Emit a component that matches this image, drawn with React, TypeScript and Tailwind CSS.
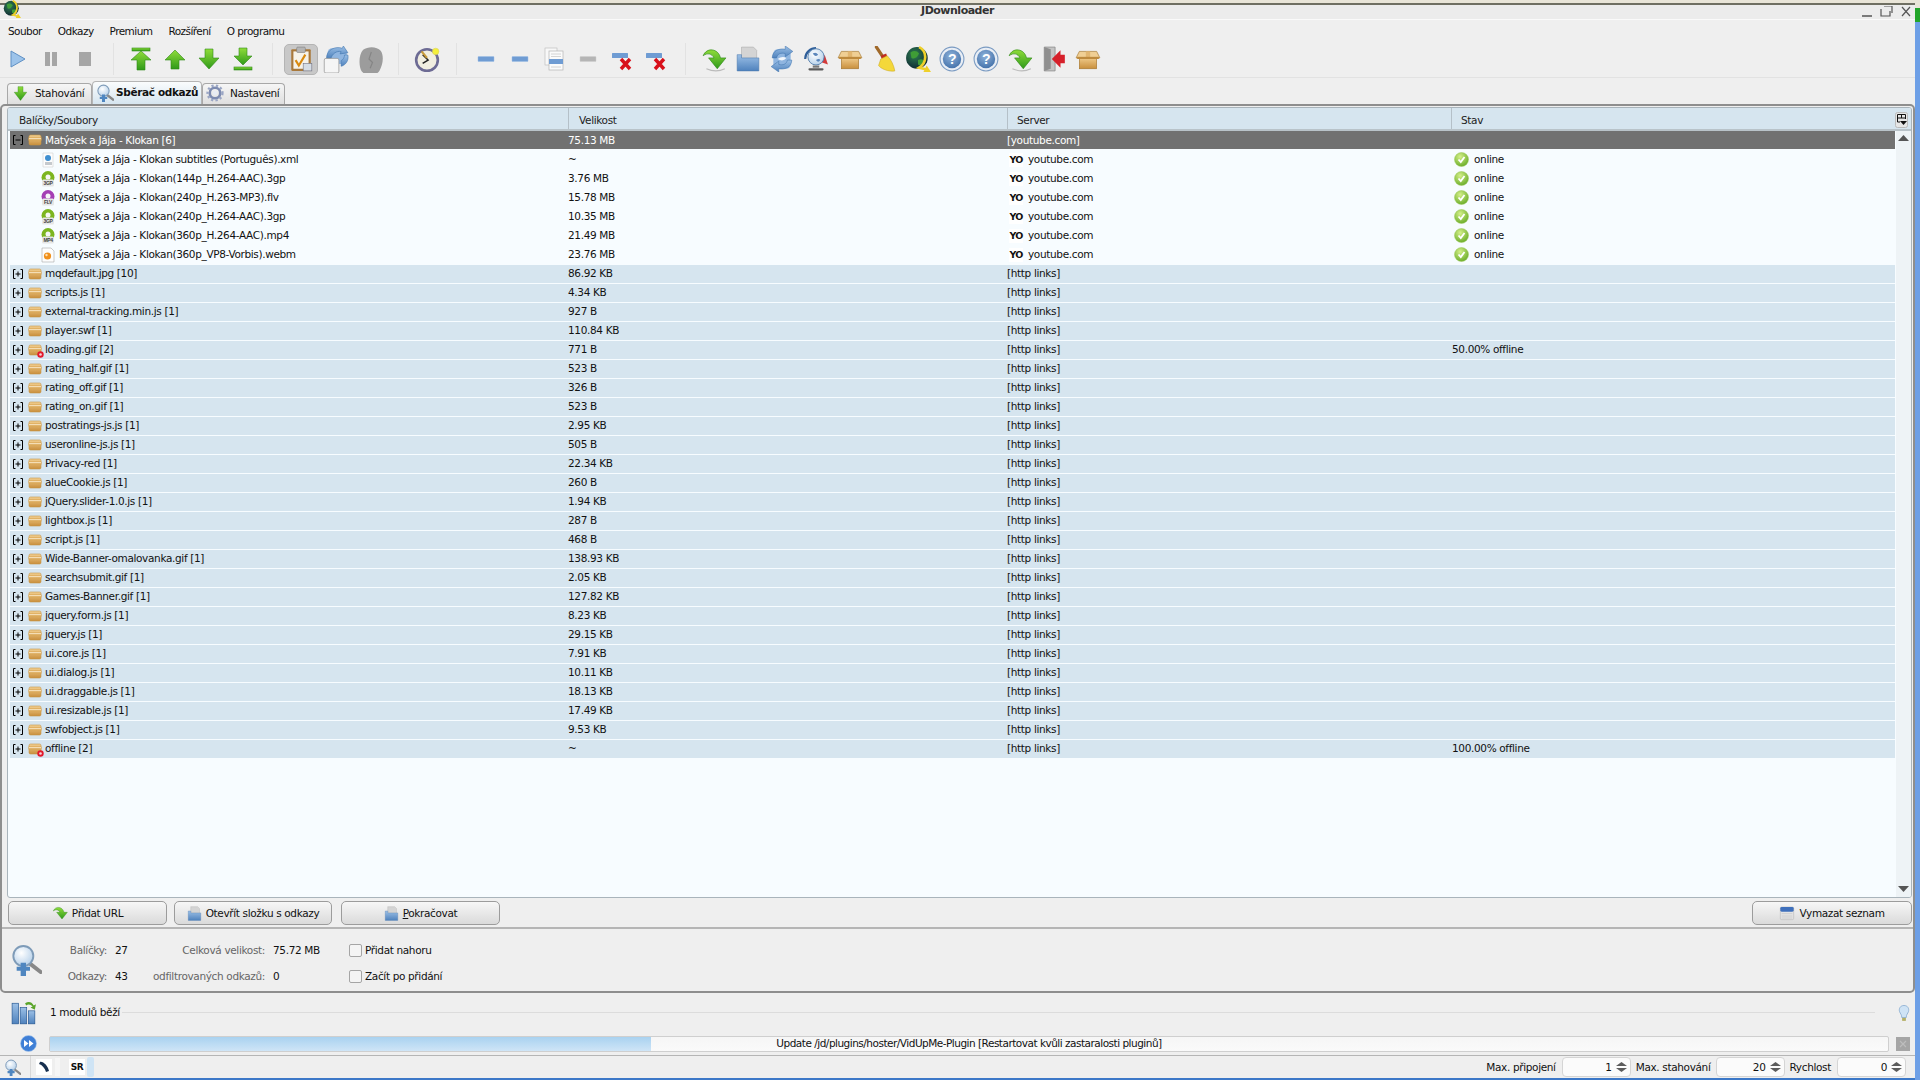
import React from "react";

const pkgs: [string, string, string?, boolean?][] = [
  ["mqdefault.jpg [10]", "86.92 KB"],
  ["scripts.js [1]", "4.34 KB"],
  ["external-tracking.min.js [1]", "927 B"],
  ["player.swf [1]", "110.84 KB"],
  ["loading.gif [2]", "771 B", "50.00% offline", true],
  ["rating_half.gif [1]", "523 B"],
  ["rating_off.gif [1]", "326 B"],
  ["rating_on.gif [1]", "523 B"],
  ["postratings-js.js [1]", "2.95 KB"],
  ["useronline-js.js [1]", "505 B"],
  ["Privacy-red [1]", "22.34 KB"],
  ["alueCookie.js [1]", "260 B"],
  ["jQuery.slider-1.0.js [1]", "1.94 KB"],
  ["lightbox.js [1]", "287 B"],
  ["script.js [1]", "468 B"],
  ["Wide-Banner-omalovanka.gif [1]", "138.93 KB"],
  ["searchsubmit.gif [1]", "2.05 KB"],
  ["Games-Banner.gif [1]", "127.82 KB"],
  ["jquery.form.js [1]", "8.23 KB"],
  ["jquery.js [1]", "29.15 KB"],
  ["ui.core.js [1]", "7.91 KB"],
  ["ui.dialog.js [1]", "10.11 KB"],
  ["ui.draggable.js [1]", "18.13 KB"],
  ["ui.resizable.js [1]", "17.49 KB"],
  ["swfobject.js [1]", "9.53 KB"],
  ["offline [2]", "~", "100.00% offline", true],
];

const kids: [string, string, string][] = [
  ["Matýsek a Jája - Klokan subtitles (Português).xml", "~", "xml"],
  ["Matýsek a Jája - Klokan(144p_H.264-AAC).3gp", "3.76 MB", "3GP"],
  ["Matýsek a Jája - Klokan(240p_H.263-MP3).flv", "15.78 MB", "FLV"],
  ["Matýsek a Jája - Klokan(240p_H.264-AAC).3gp", "10.35 MB", "3GP"],
  ["Matýsek a Jája - Klokan(360p_H.264-AAC).mp4", "21.49 MB", "MP4"],
  ["Matýsek a Jája - Klokan(360p_VP8-Vorbis).webm", "23.76 MB", "webm"],
];

function Defs() {
  return (
    <svg className="absolute w-0 h-0">
      <defs>
        <linearGradient id="gGreen" x1="0" y1="0" x2="0" y2="1"><stop offset="0" stopColor="#8fdc3a" /><stop offset="1" stopColor="#2f9a1a" /></linearGradient>
        <linearGradient id="gBlue" x1="0" y1="0" x2="0" y2="1"><stop offset="0" stopColor="#9cc0e6" /><stop offset="1" stopColor="#4f82bd" /></linearGradient>
        <linearGradient id="gBox" x1="0" y1="0" x2="0" y2="1"><stop offset="0" stopColor="#f2cf90" /><stop offset="1" stopColor="#c98f3c" /></linearGradient>
        <radialGradient id="gBall" cx="0.4" cy="0.3" r="0.8"><stop offset="0" stopColor="#d5f08a" /><stop offset="1" stopColor="#5ea51e" /></radialGradient>
        <radialGradient id="gEarth" cx="0.4" cy="0.35" r="0.75"><stop offset="0" stopColor="#2f7f50" /><stop offset="1" stopColor="#0b1f30" /></radialGradient>
        <radialGradient id="gHelp" cx="0.45" cy="0.35" r="0.75"><stop offset="0" stopColor="#8fb2da" /><stop offset="1" stopColor="#3c6ba5" /></radialGradient>
        <radialGradient id="gGlass" cx="0.4" cy="0.35" r="0.8"><stop offset="0" stopColor="#ffffff" /><stop offset="1" stopColor="#a9c8e6" /></radialGradient>
      </defs>
    </svg>
  );
}

const Ic = ({ s = 24, children }: { s?: number; children: React.ReactNode }) => (
  <svg width={s} height={s} viewBox="0 0 24 24" className="shrink-0">{children}</svg>
);

const gs = { stroke: "#2f8a18", strokeWidth: 0.6, fill: "url(#gGreen)" };

const Play = () => <Ic><path d="M6 4 L20 12 L6 20 Z" fill="#9cc3ea" stroke="#5f90c4" strokeWidth="1" /></Ic>;
const Pause = () => <Ic><rect x="6" y="5" width="5" height="14" fill="#a6a6a6" /><rect x="13" y="5" width="5" height="14" fill="#a6a6a6" /></Ic>;
const Stop = () => <Ic><rect x="6" y="5" width="12" height="14" fill="#a6a6a6" /></Ic>;
const TopI = () => <Ic><rect x="3" y="1" width="18" height="3" {...gs} /><path d="M12 4 L22 13 H16 V23 H8 V13 H2 Z" {...gs} /></Ic>;
const UpI = () => <Ic><path d="M12 3 L22 13 H16 V22 H8 V13 H2 Z" {...gs} /></Ic>;
const DownI = () => <Ic><path d="M8 2 H16 V11 H22 L12 22 L2 11 H8 Z" {...gs} /></Ic>;
const BottomI = () => <Ic><path d="M8 1 H16 V9 H21 L12 18 L3 9 H8 Z" {...gs} /><rect x="3" y="20" width="18" height="3" {...gs} /></Ic>;
const Clip = () => (
  <Ic s={26}>
    <rect x="3" y="3" width="18" height="20" rx="1" fill="#a9793b" />
    <rect x="5" y="5" width="14" height="16" fill="#f6f3ea" />
    <rect x="8" y="1" width="8" height="5" rx="1" fill="#b5b5b5" stroke="#777" strokeWidth="0.5" />
    <path d="M7 13 L10 18 L16 8" fill="none" stroke="#d98a10" strokeWidth="2" />
    <rect x="14" y="16" width="8" height="7" fill="#d5dde5" stroke="#667" strokeWidth="0.5" />
  </Ic>
);
const Cycle = ({ s = 26 }: { s?: number }) => (
  <Ic s={s}>
    <rect x="4" y="3" width="16" height="18" rx="4" fill="#8fb5e0" />
    <path d="M3 11 C3 4 10 2 15 3 L15 0 L22 5 L15 10 L15 7 C11 6 8 7 7 11 Z" fill="url(#gBlue)" stroke="#3f74ad" strokeWidth="0.5" />
    <path d="M21 13 C21 20 14 22 9 21 L9 24 L2 19 L9 14 L9 17 C13 18 16 17 17 13 Z" fill="url(#gBlue)" stroke="#3f74ad" strokeWidth="0.5" />
    <path d="M8 12 Q12 9 16 11 Q13 15 8 12 Z" fill="#f2f6fb" />
  </Ic>
);
const CycleBox = () => (
  <Ic s={27}>
    <rect x="5" y="2" width="17" height="14" rx="4" fill="#8fb5e0" />
    <path d="M4 11 C4 3 12 0 18 2 L19 0 L23 6 L16 7 L17 5 C13 4 9 7 8 11 Z" fill="url(#gBlue)" stroke="#3f74ad" strokeWidth="0.5" />
    <path d="M23 8 C24 13 21 17 17 18 V13 C19 12 20 10 20 8 Z" fill="url(#gBlue)" stroke="#3f74ad" strokeWidth="0.5" />
    <rect x="2" y="11" width="13" height="13" rx="1.500" fill="#f5f5f5" stroke="#999" strokeWidth="0.7" />
  </Ic>
);
const Blob = () => (
  <Ic s={28}><path d="M7 4 C11 1 19 1 22 5 C25 9 24 17 21 22 C18 27 10 27 6 23 C3 19 3 8 7 4 Z" fill="#9c9c9c" /><path d="M14 6 L12 12 L15 15 L13 20" fill="none" stroke="#858585" strokeWidth="1" /></Ic>
);
const Clock = () => (
  <Ic s={26}>
    <circle cx="12" cy="13" r="10" fill="#f1eee0" stroke="#6d6b94" strokeWidth="2.400" />
    <path d="M8 8 L13 13 L8 16" fill="none" stroke="#222" strokeWidth="1.400" />
    <path d="M7 5 L12 11" stroke="#c79a3a" strokeWidth="2" />
    <circle cx="20" cy="5" r="3" fill="#f4ef3a" stroke="#d8d060" strokeWidth="0.5" />
  </Ic>
);
const Minus = ({ c = "#6f9cd3" }: { c?: string }) => <Ic><rect x="4" y="9.500" width="16" height="5" rx="0.5" fill={c} stroke={c === "#6f9cd3" ? "#9fbfe4" : "#cfcfcf"} strokeWidth="0.5" /></Ic>;
const Docs = () => (
  <Ic>
    <rect x="3" y="1" width="12" height="17" fill="#f8f8f8" stroke="#c0c0c0" strokeWidth="0.7" />
    <rect x="7" y="4" width="14" height="19" fill="#fbfbfb" stroke="#b5b5b5" strokeWidth="0.7" />
    <rect x="7" y="12" width="14" height="5" fill="#6f9cd3" />
    <path d="M9 7h10M9 9.500h10M9 20h10" stroke="#ccc" strokeWidth="0.8" />
  </Ic>
);
const MinusX = () => (
  <Ic>
    <rect x="2" y="6" width="16" height="5" rx="0.5" fill="#6f9cd3" />
    <path d="M11 12 L20 22 M20 12 L11 22" stroke="#d8101a" strokeWidth="3.400" />
  </Ic>
);
const GreenCurve = () => (
  <Ic s={26}>
    <path d="M2 9 C5 1 16 2 18 11 L23 11 L15 21 L7 11 L12 11 C10 7 6 6 2 9 Z" {...gs} />
    <path d="M5 21 Q14 25 22 21" stroke="#bbb" strokeWidth="1" fill="none" />
  </Ic>
);
const FolderDoc = ({ s = 26 }: { s?: number }) => (
  <Ic s={s}>
    <path d="M6 1 H17 L20 4 V12 H6 Z" fill="#d4d4d4" stroke="#aaa" strokeWidth="0.5" />
    <path d="M2 8 H6 V11 H22 V23 H2 Z" fill="url(#gBlue)" stroke="#4a78ad" strokeWidth="0.5" />
  </Ic>
);
const GlobeStand = () => (
  <Ic s={26}>
    <path d="M2 12 C2 6 7 2 12 2" fill="none" stroke="#2f5f9a" strokeWidth="2" />
    <path d="M20 8 L23 17 L17 15 Z" fill="#d23a3a" />
    <circle cx="12" cy="10" r="7.500" fill="url(#gGlass)" stroke="#4d78a8" strokeWidth="0.8" />
    <path d="M9 7 Q12 5 14 8 Q11 11 9 7 M12 13 Q15 11 16 13 Q14 16 12 13" fill="#5b86bb" />
    <rect x="9" y="18" width="6" height="2" fill="#777" /><rect x="5" y="20.500" width="14" height="2" rx="1" fill="#5a5a5a" />
  </Ic>
);
const BigBox = () => (
  <Ic s={26}>
    <rect x="4" y="10" width="16" height="11" fill="url(#gBox)" stroke="#a67730" strokeWidth="0.6" />
    <path d="M1 11 L4 5 H20 L23 11 Z" fill="#f0cf94" stroke="#a67730" strokeWidth="0.6" />
    <path d="M10 5 H14 V11 H10 Z" fill="#e2b670" />
    <rect x="2" y="10" width="20" height="2" fill="#be8a3d" />
  </Ic>
);
const Broom = () => (
  <Ic s={26}>
    <path d="M5 1 L11 10" stroke="#a0692a" strokeWidth="3" strokeLinecap="round" />
    <path d="M9 9 L14 7 L15 10 L10 12 Z" fill="#c02b20" />
    <path d="M9 12 L15 9 C19 13 21 18 22 23 C16 24 9 21 7 18 Z" fill="#f4d83a" stroke="#cba820" strokeWidth="0.5" />
  </Ic>
);
const JDGlobe = ({ s = 26 }: { s?: number }) => (
  <Ic s={s}>
    <circle cx="11" cy="11" r="10" fill="url(#gEarth)" />
    <path d="M5 6 Q10 3 13 7 Q10 13 6 11 Z M12 13 Q16 11 18 14 Q15 19 12 17 Z" fill="#3f9d36" />
    <path d="M13 1 C21 5 20 16 13 20 L21 22" fill="none" stroke="#efd02a" strokeWidth="2.400" />
    <path d="M20 18 L24 24 L17 24 Z" fill="#efd02a" />
  </Ic>
);
const Help = () => (
  <Ic s={26}>
    <circle cx="12" cy="12" r="11" fill="#e9eef5" stroke="#7b9bc2" strokeWidth="1" />
    <circle cx="12" cy="12" r="8.500" fill="url(#gHelp)" />
    <text x="12" y="16.500" textAnchor="middle" fontSize="13" fontWeight="700" fill="#fff" fontFamily="Liberation Sans, sans-serif">?</text>
  </Ic>
);
const Exit = () => (
  <Ic s={26}>
    <path d="M3 1 H13 V23 H3 Z" fill="#c4c4c4" stroke="#888" strokeWidth="0.7" />
    <path d="M3 1 L9 3 V21 L3 23 Z" fill="#8f8f8f" />
    <path d="M22 8 V16 H18 V20 L10 12 L18 4 V8 Z" fill="#d6202a" />
  </Ic>
);
const Magnifier = ({ s = 20 }: { s?: number }) => (
  <Ic s={s}>
    <path d="M14 14 L23 21" stroke="#888" strokeWidth="3" strokeLinecap="round" />
    <circle cx="10" cy="9" r="7.500" fill="url(#gGlass)" stroke="#7e9bb8" strokeWidth="1.400" />
    <path d="M8 14 H12 V17 H15 V20 H12 V24 H8 V20 H5 V17 H8 Z" fill="#4f86c0" />
  </Ic>
);
const Gear = () => (
  <Ic s={18}>
    <circle cx="12" cy="12" r="7" fill="none" stroke="#7d8bb0" strokeWidth="3.500" />
    <circle cx="12" cy="12" r="10" fill="none" stroke="#9aa6c4" strokeWidth="3" strokeDasharray="3 3" />
    <circle cx="12" cy="12" r="3" fill="#e8ecf4" />
  </Ic>
);
const SmallBox = ({ off }: { off?: boolean }) => (
  <span className="relative block w-[14px] h-[12px] shrink-0">
    <svg width="14" height="12" viewBox="0 0 14 12" className="block">
      <rect x="1" y="1" width="12" height="10" rx="1.500" fill="url(#gBox)" stroke="#c69445" strokeWidth="0.6" />
      <rect x="0.500" y="3.500" width="13" height="3" fill="#d9a553" />
      <rect x="1" y="4.200" width="12" height="1" fill="#fbeccc" />
    </svg>
    {off && <svg width="7" height="7" viewBox="0 0 7 7" className="absolute right-[-2px] bottom-[-2px]"><circle cx="3.500" cy="3.500" r="3.200" fill="#e3182c" /><circle cx="3.500" cy="3.500" r="1.300" fill="#f4d4d8" /></svg>}
  </span>
);
const Exp = ({ minus }: { minus?: boolean }) => (
  <svg width="10" height="10" viewBox="0 0 10 10" className="shrink-0">
    <path d="M2.500 .500 H.500 V9.500 H2.500 M7.500 .500 H9.500 V9.500 H7.500" fill="none" stroke="#000" />
    <path d={minus ? "M2.500 5 H7.500" : "M2.500 5 H7.500 M5 2.500 V7.500"} fill="none" stroke="#000" />
  </svg>
);
const FileIc = ({ t }: { t: string }) => {
  if (t === "xml")
    return (
      <svg width="16" height="16" viewBox="0 0 16 16" className="shrink-0">
        <path d="M3 1 H13 V15 H3 Z" fill="#fdfdfd" stroke="#d0d0d0" strokeWidth="0.6" />
        <circle cx="8" cy="6" r="3" fill="#3f8fd0" /><rect x="5" y="10" width="7" height="3" fill="#c5c9cd" />
      </svg>
    );
  if (t === "webm")
    return (
      <svg width="16" height="16" viewBox="0 0 16 16" className="shrink-0">
        <path d="M2 1 H11 L14 4 V15 H2 Z" fill="#fdfdfd" stroke="#a8a8a8" strokeWidth="0.6" />
        <circle cx="7.500" cy="9" r="3.600" fill="#f0901c" /><circle cx="6.500" cy="8" r="1.200" fill="#ffe0b0" />
      </svg>
    );
  const c = t === "FLV" ? "#a53fb5" : "#7cb51f";
  return (
    <svg width="16" height="16" viewBox="0 0 16 16" className="shrink-0">
      <circle cx="8" cy="6.500" r="6.500" fill={c} />
      <circle cx="8" cy="6" r="2.500" fill="#f6f6f6" />
      <rect x="2" y="8.500" width="12" height="7" rx="1.500" fill="#e6e6e6" />
      <text x="8" y="14" textAnchor="middle" fontSize="5" fontWeight="700" fill="#444" fontFamily="Liberation Sans, sans-serif">{t}</text>
    </svg>
  );
};
const Ok = () => (
  <svg width="15" height="15" viewBox="0 0 15 15" className="shrink-0">
    <circle cx="7.500" cy="7.500" r="7" fill="url(#gBall)" stroke="#9cc95a" strokeWidth="0.5" />
    <path d="M4.500 7.500 L6.800 10 L10.500 5" fill="none" stroke="#fff" strokeWidth="1.800" />
  </svg>
);
const Arrows = () => (
  <svg width="15" height="12" viewBox="0 0 15 12" className="shrink-0">
    <path d="M7.500 1 L13 5 H2 Z M2 7 H13 L7.500 11 Z" fill="#5c5c5c" />
  </svg>
);

const ToolBtn = ({ children, on }: { children: React.ReactNode; on?: boolean }) => (
  <div className={on ? "w-[34px] h-[31px] flex items-center justify-center bg-[#c8c8c8] border border-[#b4b4b4] rounded-[5px]" : "w-[34px] h-[31px] flex items-center justify-center"}>{children}</div>
);
const Sep = ({ w }: { w: string }) => (
  <div className={w + " h-[32px] flex justify-center"}><div className="w-px h-full bg-[#e2e2e2]" /></div>
);
const Btn = ({ w, children }: { w: string; children: React.ReactNode }) => (
  <div className={w + " h-[24px] flex items-center justify-center gap-[4px] rounded-[5px] border border-[#9c9c9c] bg-gradient-to-b from-[#f7f7f7] to-[#dadada]"}>{children}</div>
);
const Tab = ({ w, on, children }: { w: string; on?: boolean; children: React.ReactNode }) => (
  <div className={w + (on
    ? " h-[23px] mt-0 pb-px flex items-center whitespace-nowrap rounded-t-[4px] border border-b-0 border-[#b5b5b5] bg-gradient-to-b from-[#fafcfd] to-[#d6e5ef]"
    : " h-[21px] mt-[1px] pb-[2px] flex items-center whitespace-nowrap rounded-t-[4px] border border-b-0 border-[#a8a8a8] bg-gradient-to-b from-[#f6f6f6] to-[#dfdfdf]")}>{children}</div>
);
const Spin = ({ v }: { v: string }) => (
  <div className="w-[69px] h-[20px] bg-[#fbfbfb] border border-[#d5d5d5] rounded-[4px] flex items-center justify-end pr-[1px] gap-[2px]">
    <span>{v}</span><Arrows />
  </div>
);

export default function App() {
  return (
    <div className="relative w-[1920px] h-[1080px] overflow-hidden flex bg-[#efefef] text-[#111] text-[10.5px] tracking-[-0.35px] leading-none font-['DejaVu_Sans',sans-serif]">
      <Defs />
      <div className="w-[1915px] h-full flex flex-col">
        {/* window top */}
        <div className="h-[5px] bg-[#e9e5d8] border-b-2 border-[#6f6f62] shrink-0" />
        <div className="h-[15px] shrink-0 bg-[#ececec] border-b border-[#fafafa] flex items-center relative">
          <div className="absolute left-[3px] top-[-5px]"><JDGlobe s={18} /></div>
          <div className="w-full pb-[3px] text-center font-bold text-[#333] text-[11px] tracking-[-0.5px]">JDownloader</div>
          <div className="absolute right-[4px] top-0 h-[14px] flex items-center gap-[8px]">
            <svg width="10" height="12" viewBox="0 0 10 12"><path d="M0 10 H10" stroke="#555" strokeWidth="1.500" /></svg>
            <svg width="13" height="12" viewBox="0 0 13 12"><path d="M1 3 V10 H10 V5 M4 0 H12 V7" fill="none" stroke="#555" strokeWidth="1.200" /></svg>
            <svg width="10" height="12" viewBox="0 0 10 12"><path d="M1 1 L9 10 M9 1 L1 10" stroke="#555" strokeWidth="1.200" /></svg>
          </div>
        </div>

        {/* menu */}
        <div className="h-[20px] shrink-0 flex items-center pl-[8px] pt-[3px] gap-[16px] tracking-[-0.55px] bg-[#efefef]">
          <span>Soubor</span><span>Odkazy</span><span>Premium</span><span>Rozšíření</span><span>O programu</span>
        </div>

        {/* toolbar */}
        <div className="h-[38px] shrink-0 flex items-center border-b border-[#e2e2e2] pt-[1px]">
          <ToolBtn><Play /></ToolBtn><ToolBtn><Pause /></ToolBtn><ToolBtn><Stop /></ToolBtn>
          <Sep w="w-[22px]" />
          <ToolBtn><TopI /></ToolBtn><ToolBtn><UpI /></ToolBtn><ToolBtn><DownI /></ToolBtn><ToolBtn><BottomI /></ToolBtn>
          <Sep w="w-[24px]" />
          <ToolBtn on><Clip /></ToolBtn><ToolBtn><CycleBox /></ToolBtn><ToolBtn><Blob /></ToolBtn>
          <Sep w="w-[24px]" />
          <ToolBtn><Clock /></ToolBtn>
          <Sep w="w-[25px]" />
          <ToolBtn><Minus /></ToolBtn><ToolBtn><Minus /></ToolBtn><ToolBtn><Docs /></ToolBtn><ToolBtn><Minus c="#b5b5b5" /></ToolBtn><ToolBtn><MinusX /></ToolBtn><ToolBtn><MinusX /></ToolBtn>
          <Sep w="w-[24px]" />
          <ToolBtn><GreenCurve /></ToolBtn><ToolBtn><FolderDoc /></ToolBtn><ToolBtn><Cycle /></ToolBtn><ToolBtn><GlobeStand /></ToolBtn><ToolBtn><BigBox /></ToolBtn><ToolBtn><Broom /></ToolBtn><ToolBtn><JDGlobe /></ToolBtn><ToolBtn><Help /></ToolBtn><ToolBtn><Help /></ToolBtn><ToolBtn><GreenCurve /></ToolBtn><ToolBtn><Exit /></ToolBtn><ToolBtn><BigBox /></ToolBtn>
        </div>

        {/* tabs */}
        <div className="h-[26px] shrink-0 flex items-end pl-[7px]">
          <Tab w="w-[85px]"><span className="ml-[5px] mr-[7px]"><Ic s={15}><path d="M8 1 H16 V10 H22 L12 23 L2 10 H8 Z" {...gs} /></Ic></span>Stahování</Tab>
          <Tab w="w-[110px]" on><span className="ml-[3px] mr-[2px]"><Magnifier s={18} /></span><span className="font-bold text-[10.5px] tracking-[-0.35px]">Sběrač odkazů</span></Tab>
          <Tab w="w-[83px]"><span className="ml-[3px] mr-[6px]"><Gear /></span>Nastavení</Tab>
        </div>

        {/* main panel */}
        <div className="h-[889px] shrink-0 flex flex-col border-2 border-l-2 border-[#8e8e8e] rounded-[5px] bg-[#efefef]">
          {/* table */}
          <div className="mt-[1px] ml-[5px] mr-[1px] h-[791px] flex flex-col border border-[#a9b4bb] bg-[#f7fcff] rounded-[3px] overflow-hidden">
            <div className="h-[23px] shrink-0 flex bg-[#d6e5ef] border-b-2 border-[#b9c3c9] text-[#222]">
              <div className="w-[560px] pl-[11px] pt-[4px] flex items-center">Balíčky/Soubory</div>
              <div className="w-[439px] pl-[10px] pt-[4px] flex items-center border-l border-[#b5c0c8]">Velikost</div>
              <div className="w-[444px] pl-[9px] pt-[4px] flex items-center border-l border-[#b5c0c8]">Server</div>
              <div className="flex-1 pl-[9px] pt-[4px] flex items-center border-l border-[#b5c0c8]">Stav</div>
              <div className="w-[16px] flex items-start mt-[4px]">
                <svg width="13" height="16" viewBox="0 0 13 16"><rect x="0.500" y="0.500" width="12" height="15" rx="2" fill="#e6e6e6" stroke="#bbb" /><path d="M2.500 2.500 H10.500 M2.500 2.500 V10 H5 M2.500 6 H10.500 M6.500 2.500 V6 M10.500 2.500 V7" fill="none" stroke="#111" /><path d="M5 9 H12 L8.500 13 Z" fill="#111" /></svg>
              </div>
            </div>
            <div className="flex-1 flex min-h-0">
              <div className="w-[1885px] ml-[2px] flex flex-col">
                <div className="h-[19px] shrink-0 flex items-center bg-[#717171] text-white border-b border-[#f7fcff]">
                  <div className="w-[558px] flex items-center pl-[3px]"><Exp minus /><span className="ml-[5px]"><SmallBox /></span><span className="ml-[3px]">Matýsek a Jája - Klokan [6]</span></div>
                  <div className="w-[439px]">75.13 MB</div>
                  <div className="w-[444px]">[youtube.com]</div>
                </div>
                {kids.map((k) => (
                  <div key={k[0] + k[1]} className="h-[19px] shrink-0 flex items-center">
                    <div className="w-[558px] flex items-center pl-[30px]"><FileIc t={k[2]} /><span className="ml-[3px]">{k[0]}</span></div>
                    <div className="w-[439px]">{k[1]}</div>
                    <div className="w-[444px] flex items-center pl-[2px]">
                      <span className="w-[14px] h-[14px] bg-white flex items-center justify-center font-bold text-[9.5px] tracking-[-0.8px]">YO</span>
                      <span className="ml-[5px]">youtube.com</span>
                    </div>
                    <div className="flex items-center pl-[3px]"><Ok /><span className="ml-[5px]">online</span></div>
                  </div>
                ))}
                {pkgs.map((p) => (
                  <div key={p[0]} className="h-[19px] shrink-0 flex items-center bg-[#d6e5ef] border-t border-[#f7fcff] pb-[1px]">
                    <div className="w-[558px] flex items-center pl-[3px]"><Exp /><span className="ml-[5px]"><SmallBox off={p[3]} /></span><span className="ml-[3px]">{p[0]}</span></div>
                    <div className="w-[439px]">{p[1]}</div>
                    <div className="w-[444px]">[http links]</div>
                    <div className="pl-px">{p[2]}</div>
                  </div>
                ))}
              </div>
              <div className="flex-1 bg-[#eef3f6] flex flex-col items-center justify-between py-[4px] border-l border-[#f7fcff]">
                <svg width="11" height="7" viewBox="0 0 11 7"><path d="M5.500 0 L11 6 H0 Z" fill="#555" /></svg>
                <svg width="11" height="7" viewBox="0 0 11 7"><path d="M0 0 H11 L5.500 6 Z" fill="#555" /></svg>
              </div>
            </div>
          </div>

          {/* buttons */}
          <div className="h-[28px] shrink-0 flex items-center pl-[6px] pr-[1px] gap-[7px] pt-[2px]">
            <Btn w="w-[159px]"><GreenCurve2 />Přidat URL</Btn>
            <Btn w="w-[158px]"><FolderDoc s={15} />Otevřít složku s odkazy</Btn>
            <div className="ml-[2px]"><Btn w="w-[159px]"><FolderDoc s={15} /><span><span className="underline">P</span>okračovat</span></Btn></div>
            <div className="flex-1" />
            <Btn w="w-[160px]"><CalIc />Vymazat seznam</Btn>
          </div>

          {/* stats */}
          <div className="flex-1 border-t-2 border-[#b5b5b5] mt-[1px] flex items-center pl-[8px]">
            <Magnifier s={32} />
            <div className="mt-[6px] grid grid-cols-[65px_40px_118px_84px] grid-rows-[26px_26px] items-center">
              <span className="text-right text-[#666]">Balíčky:</span><span className="pl-[8px]">27</span>
              <span className="text-right text-[#666]">Celková velikost:</span><span className="pl-[8px]">75.72 MB</span>
              <span className="text-right text-[#666]">Odkazy:</span><span className="pl-[8px]">43</span>
              <span className="text-right text-[#666]">odfiltrovaných odkazů:</span><span className="pl-[8px]">0</span>
            </div>
            <div className="mt-[6px] grid grid-rows-[26px_26px] items-center">
              <label className="flex items-center gap-[3px]"><span className="w-[13px] h-[13px] border border-[#a5a5a5] rounded-[2px] bg-[#f4f4f4]" />Přidat nahoru</label>
              <label className="flex items-center gap-[3px]"><span className="w-[13px] h-[13px] border border-[#a5a5a5] rounded-[2px] bg-[#f4f4f4]" />Začít po přidání</label>
            </div>
          </div>
        </div>

        {/* module row */}
        <div className="h-[39px] shrink-0 flex items-center pl-[11px] pr-[2px]">
          <Ic s={26}>
            <path d="M13 3 Q18 0 21 5 L23 4 L22 9 L18 7 L20 6 Q17 3 14 5 Z" fill="#5aa52a" />
            <rect x="1" y="3" width="6" height="19" fill="url(#gBlue)" stroke="#23548f" strokeWidth="0.6" />
            <rect x="8.500" y="7" width="6" height="15" fill="url(#gBlue)" stroke="#23548f" strokeWidth="0.6" />
            <rect x="16" y="10" width="6" height="12" fill="url(#gBlue)" stroke="#23548f" strokeWidth="0.6" />
          </Ic>
          <span className="ml-[13px]">1 modulů běží</span>
          <div className="ml-[2px] flex-1 h-px bg-[#dcdcdc]" />
          <span className="ml-[20px]">
            <Ic s={18}>
              <path d="M12 2 C7 2 5 6 6 10 C7 13 9 14 9 18 H15 C15 14 17 13 18 10 C19 6 17 2 12 2 Z" fill="#cfe3f5" stroke="#7fa6cc" strokeWidth="1" />
              <rect x="9.500" y="18.500" width="5" height="4" fill="#b5b066" />
            </Ic>
          </span>
        </div>

        {/* progress row */}
        <div className="h-[23px] shrink-0 flex items-center pl-[20px] pr-[5px]">
          <svg width="17" height="17" viewBox="0 0 17 17" className="shrink-0">
            <circle cx="8.500" cy="8.500" r="8" fill="#3f7fd6" stroke="#a8c8ec" strokeWidth="0.6" />
            <path d="M4 5 L8.500 8.500 L4 12 Z M9 5 L13.500 8.500 L9 12 Z" fill="#fff" />
          </svg>
          <div className="ml-[12px] w-[1840px] h-[16px] relative border border-[#cfcfcf] rounded-[2px] bg-gradient-to-b from-[#f6f6f6] to-[#fafafa] flex items-center justify-center">
            <div className="absolute left-0 top-0 bottom-0 w-[601px] bg-gradient-to-b from-[#a9d2f0] to-[#cfe5f7]" />
            <span className="relative tracking-[-0.5px]">Update /jd/plugins/hoster/VidUpMe-Plugin [Restartovat kvůli zastaralosti pluginů]</span>
          </div>
          <div className="ml-[7px] w-[14px] h-[14px] bg-[#a5a5a5] flex items-center justify-center">
            <svg width="8" height="8" viewBox="0 0 8 8"><path d="M1 1 L7 7 M7 1 L1 7" stroke="#bdbdbd" strokeWidth="1.200" /></svg>
          </div>
        </div>

        {/* status bar */}
        <div className="flex-1 border-t border-[#b5b5b5] flex items-center pr-[9px]">
          <span className="ml-[4px]"><Magnifier s={17} /></span>
          <div className="ml-[9px] w-px h-full bg-[#d8d8d8]" />
          <div className="ml-[5px] w-[16px] h-[16px] bg-white flex items-center justify-center">
            <svg width="14" height="14" viewBox="0 0 14 14"><path d="M3 2 C6 1 11 6 12 11 L9 12 C8 8 5 5 2 4 Z" fill="#18304f" /></svg>
          </div>
          <div className="ml-[3px] w-[5px] h-[18px] bg-[#f6f6f6]" />
          <div className="ml-[9px] w-[16px] h-[16px] bg-white flex items-center justify-center font-bold text-[9px] tracking-[-0.5px]">SR</div>
          <div className="ml-[2px] w-[7px] h-[20px] bg-[#cfe4f5] rounded-[2px]" />
          <div className="flex-1" />
          <span>Max. připojení</span>
          <span className="ml-[6px]"><Spin v="1" /></span>
          <span className="ml-[5px]">Max. stahování</span>
          <span className="ml-[5px]"><Spin v="20" /></span>
          <span className="ml-[5px]">Rychlost</span>
          <span className="ml-[6px]"><Spin v="0" /></span>
        </div>
        <div className="h-[2px] shrink-0 bg-[#3c78c8]" />
      </div>
      {/* desktop edge */}
      <div className="flex-1 flex flex-col bg-[#6d9fe6]">
        <div className="h-[8px] bg-[#e9e5d8]" />
        <div className="h-[14px] bg-[#22a52a]" />
      </div>
    </div>
  );
}

function GreenCurve2() {
  return (
    <Ic s={16}>
      <path d="M2 9 C5 1 16 2 18 11 L23 11 L15 21 L7 11 L12 11 C10 7 6 6 2 9 Z" {...gs} />
    </Ic>
  );
}
function CalIc() {
  return (
    <Ic s={16}>
      <rect x="2" y="3" width="20" height="19" rx="2" fill="#e4e4e4" stroke="#a5a5a5" strokeWidth="0.6" />
      <rect x="2" y="3" width="20" height="7" rx="2" fill="#3f70bc" />
      <path d="M4 13 H20 M4 16.500 H20 M4 19.500 H20" stroke="#bdbdbd" strokeWidth="0.8" />
    </Ic>
  );
}
